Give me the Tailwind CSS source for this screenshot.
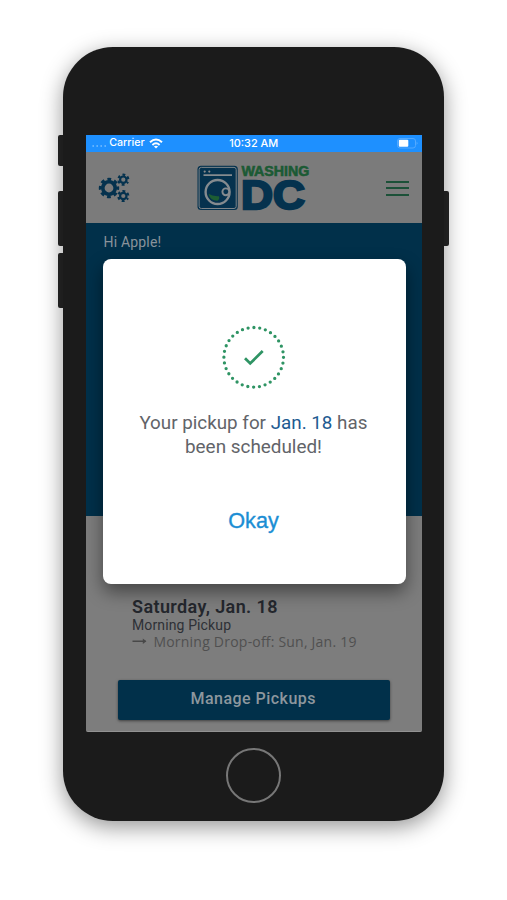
<!DOCTYPE html>
<html lang="en">
<head>
<meta charset="utf-8">
<title>Washing DC</title>
<script src="https://cdn.jsdelivr.net/npm/@tailwindcss/browser@4"></script>
</head>
<body class="bg-white w-[507px] h-[900px] overflow-hidden font-[Roboto,sans-serif]">
<div class="relative ml-[63.4px] mt-[47.4px] w-[381px] h-[774px]">
  <!-- side buttons -->
  <div class="absolute -left-[5px] top-[87.4px] w-[8px] h-[31px] rounded-[2px] bg-[#262626]"></div>
  <div class="absolute -left-[5px] top-[143.4px] w-[8px] h-[55px] rounded-[2px] bg-[#262626]"></div>
  <div class="absolute -left-[5px] top-[205.4px] w-[8px] h-[55px] rounded-[2px] bg-[#262626]"></div>
  <div class="absolute -right-[5px] top-[143.4px] w-[8px] h-[55px] rounded-[2px] bg-[#262626]"></div>

  <div class="relative w-full h-full rounded-[50px] bg-[#1b1b1b] shadow-[0_6px_22px_rgba(0,0,0,0.42)] flex flex-col items-center pt-[87.3px]">
    <main class="relative w-[336.5px] h-[597.5px] shrink-0 bg-[#7d7d7d] overflow-hidden flex flex-col rounded-b-[2px] border-b border-[#929292]">
      <!-- status bar -->
      <div class="h-[17.5px] shrink-0 bg-[#1e90ff] text-white flex items-center justify-between text-[11px] font-medium font-[Inter,sans-serif] pl-[6px] pr-[4px] relative">
        <div class="flex items-center">
          <svg class="w-[15px] h-[4px] mt-[5px] mr-[2.5px]" viewBox="0 0 15 4" fill="#6fb9ff"><circle cx="1.2" cy="2" r=".9"/><circle cx="5.2" cy="2" r=".9"/><circle cx="9.2" cy="2" r=".9"/><circle cx="13.2" cy="2" r=".9"/></svg>
          <svg class="w-[37px] h-[16px]" viewBox="0 0 37 16"><text x="0.2" y="11.4" textLength="35.5" lengthAdjust="spacingAndGlyphs" font-size="10.8" fill="#fff">Carrier</text></svg>
          <svg class="w-[14px] h-[11px] ml-[3px]" viewBox="0 0 14 11" fill="none" stroke="#fff" stroke-width="2"><path d="M1 4.3Q7-1.3 13 4.3M3.4 6.9q3.6-3.2 7.2 0"/><path d="M7 10.6L4.9 8.6Q7 7 9.1 8.6Z" fill="#fff" stroke="none"/></svg>
        </div>
        <svg class="absolute left-[143px] top-[.5px] w-[52px] h-[16px]" viewBox="0 0 52 16"><text x="0.2" y="11.5" textLength="49" lengthAdjust="spacingAndGlyphs" font-size="10.8" fill="#fff">10:32 AM</text></svg>
        <svg class="w-[21px] h-[11px]" viewBox="0 0 21 11"><rect x=".5" y=".5" width="18" height="9.5" rx="2.5" fill="none" stroke="#53a9ff"/><rect x="1.8" y="1.8" width="9.5" height="6.9" rx="1" fill="#fff"/><path d="M19.8 3.5q1.2 1.7 0 3.4z" fill="#8cc6ff"/></svg>
      </div>
      <!-- header -->
      <header class="h-[71px] shrink-0 bg-[#7b7b7b] flex items-center">
        <svg class="ml-[12.5px] w-[33px] h-[34px]" viewBox="0 0 33 34" fill="none" stroke="#05324e">
          <circle cx="11" cy="17" r="6.2" stroke-width="3.6"/><circle cx="11" cy="17" r="8.7" stroke-width="3" stroke-dasharray="3.7 3.133" stroke-dashoffset="1.85"/>
          <circle cx="25.3" cy="8.7" r="3.2" stroke-width="2.2"/><circle cx="25.3" cy="8.7" r="5" stroke-width="2.2" stroke-dasharray="2.7 2.536" stroke-dashoffset="1.35" transform="rotate(30 25.3 8.7)"/>
          <circle cx="25.3" cy="25" r="3.2" stroke-width="2.2"/><circle cx="25.3" cy="25" r="5" stroke-width="2.2" stroke-dasharray="2.7 2.536" stroke-dashoffset="1.35" transform="rotate(30 25.3 25)"/>
        </svg>
        <svg class="ml-[65.5px] w-[114px] h-[60px]" viewBox="0 -6 114 60">
          <rect x=".5" y="1.8" width="40.3" height="44.3" rx="3.5" fill="#05324e"/>
          <rect x="2.1" y="3.4" width="37.1" height="41.1" rx="2.2" fill="none" stroke="#7d8488" stroke-width="1"/>
          <circle cx="7.7" cy="7.6" r="1.1" fill="#8b8b8b"/><circle cx="12.3" cy="7.6" r="1.1" fill="#8b8b8b"/>
          <path d="M6.5 11.2H35" stroke="#858b8f" stroke-width="1.8"/>
          <circle cx="20.6" cy="28" r="12" fill="none" stroke="#858b8f" stroke-width="2.4"/>
          <circle cx="28.8" cy="27.8" r="3.4" fill="#05324e" stroke="#858b8f" stroke-width="1.9"/>
          <path d="M11.5 29.8q4 2.8 10.5 2.4q1 2.6-1.5 4.6q-7.3.2-9-7z" fill="#1d5e33"/>
          <g font-family="Liberation Sans, sans-serif" font-weight="700">
            <text x="44.4" y="12.2" font-size="14.6" textLength="68" lengthAdjust="spacingAndGlyphs" fill="#1b5a34" stroke="#1b5a34" stroke-width=".6">WASHING</text>
            <text x="44" y="44.8" font-size="41.5" textLength="64" lengthAdjust="spacingAndGlyphs" fill="#05324e" stroke="#05324e" stroke-width="2.4">DC</text>
          </g>
        </svg>
        <div class="ml-[75px] mt-px w-[23px] flex flex-col gap-[4.5px]">
          <div class="h-[2px] bg-[#1c5138]"></div><div class="h-[2px] bg-[#1c5138]"></div><div class="h-[2px] bg-[#1c5138]"></div>
        </div>
      </header>
      <section class="h-[292.5px] shrink-0 bg-[#01304a] pt-[10px] pl-[18px]">
        <svg class="w-[60px] h-[20px]" viewBox="0 0 60 20"><text x="-.4" y="13.8" textLength="57.5" font-size="14" fill="#8a939a">Hi Apple!</text></svg>
      </section>
      <section class="pt-[79.5px] px-[32px] flex flex-col">
        <svg class="ml-[14px] w-[240px] h-[56px]" viewBox="0 0 240 56">
          <text x="0" y="18" textLength="145.5" font-size="18" font-weight="600" fill="#24272d">Saturday, Jan. 18</text>
          <text x="0" y="35" textLength="99" font-size="14" fill="#2d3036">Morning Pickup</text>
          <path d="M.5 46.2H13.5" fill="none" stroke="#484848" stroke-width="1.5"/><path d="M10.8 43.4L14.4 46.2L10.8 49Z" fill="#484848"/>
          <text x="21.4" y="52" textLength="203" font-size="14" font-family="Open Sans, sans-serif" fill="#505050">Morning Drop-off: Sun, Jan. 19</text>
        </svg>
        <button class="mt-[29px] h-[40px] w-[272px] rounded-[2px] bg-[#01304a] shadow-[0_1px_3px_rgba(0,0,0,0.5)] flex justify-center items-center">
          <svg class="w-[127px] h-[24px]" viewBox="0 0 127 24"><text x="0.5" y="16" textLength="125" font-size="16" font-weight="500" fill="#8d979e">Manage Pickups</text></svg>
        </button>
      </section>
      <!-- dialog -->
      <div role="dialog" class="absolute left-[17px] top-[124.8px] w-[303px] h-[325px] rounded-[8px] bg-white shadow-[0_8px_18px_rgba(0,0,0,0.45)] flex flex-col items-center pt-[66px]">
        <svg class="w-[64px] h-[64px]" viewBox="0 0 64 64" fill="none" stroke="#2f9464">
          <circle cx="31.7" cy="32.3" r="29.8" stroke-width="3.3" stroke-linecap="round" stroke-dasharray="0 5.8512"/>
          <path d="M23 33.2l5.2 5.2L40.7 26.1" stroke-width="2.8"/>
        </svg>
        <svg class="mt-[18px] w-[240px] h-[54px]" viewBox="0 0 240 54" font-size="19" fill="#626469">
          <text x="5.4" y="22.3" textLength="228" lengthAdjust="spacingAndGlyphs" xml:space="preserve">Your pickup for <tspan fill="#205a91">Jan. 18</tspan> has</text>
          <text x="51" y="45.7" textLength="137" lengthAdjust="spacingAndGlyphs">been scheduled!</text>
        </svg>
        <svg class="mt-[44px] w-[56px] h-[32px]" viewBox="0 0 56 32"><text x="2.3" y="23.2" textLength="50.5" lengthAdjust="spacingAndGlyphs" font-family="Liberation Sans, sans-serif" font-size="21.5" fill="#1b8ed4" stroke="#1b8ed4" stroke-width=".35">Okay</text></svg>
      </div>
    </main>
    <div class="mt-[16px] w-[55px] h-[55px] rounded-full border-2 border-[#777]"></div>
  </div>
</div>
</body>
</html>
